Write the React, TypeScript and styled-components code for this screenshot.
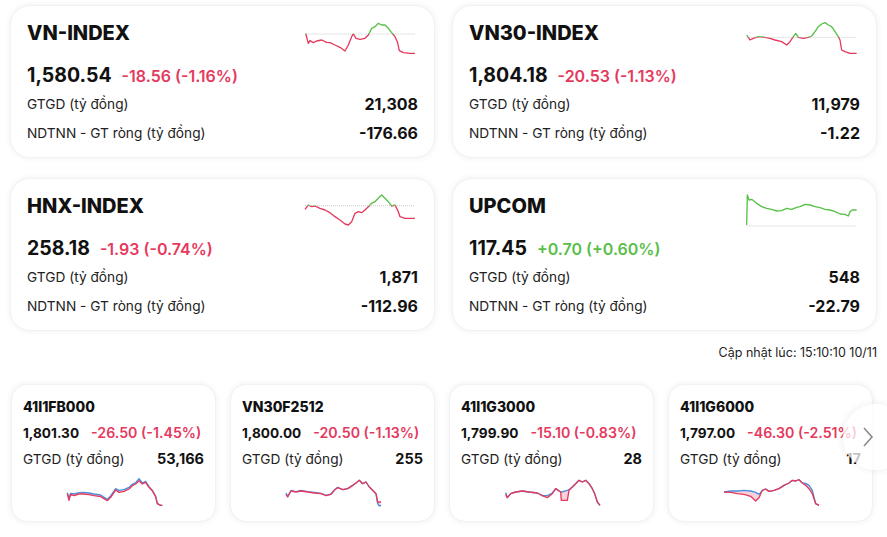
import React from 'react';
import styled, { createGlobalStyle } from 'styled-components';

const GlobalStyle = createGlobalStyle`
  html, body {
    margin: 0;
    padding: 0;
    background: #ffffff;
    font-family: Inter, 'Noto Sans', 'Liberation Sans', sans-serif;
    color: #111;
  }
  * { box-sizing: border-box; }
`;

const RED = '#e5395d';
const GREEN = '#58c048';

const Page = styled.div`
  width: 887px;
  height: 537px;
  overflow: hidden;
  padding: 5px 10px 0 10px;
`;

const IndexGrid = styled.div`
  display: grid;
  grid-template-columns: 425px 425px;
  column-gap: 17px;
  row-gap: 20px;
`;

const IndexCard = styled.div`
  height: 153px;
  background: #fff;
  border-radius: 20px;
  box-shadow: 0 0 6px rgba(0, 0, 0, 0.07);
  border: 1px solid #f1f2f4;
  padding: 12px 16px 0 16px;
`;

const CardHeader = styled.div`
  display: flex;
  justify-content: space-between;
  align-items: flex-start;
  height: 40px;
`;

const IndexName = styled.div`
  font-size: 20px;
  font-weight: 800;
  line-height: 30px;
`;

const PriceRow = styled.div`
  display: flex;
  align-items: baseline;
  gap: 10px;
  margin-top: 4px;
  line-height: 26px;
  white-space: nowrap;
`;

const Price = styled.span`
  font-size: 19.5px;
  font-weight: 700;
`;

const Change = styled.span<{ $up?: boolean }>`
  font-size: 16px;
  font-weight: 600;
  color: ${({ $up }) => ($up ? GREEN : RED)};
`;

const StatRow = styled.div`
  display: flex;
  justify-content: space-between;
  align-items: center;
  height: 29px;
`;

const StatLabel = styled.span`
  font-size: 13.7px;
  color: #222;
`;

const StatValue = styled.span`
  font-size: 16px;
  font-weight: 700;
`;

const UpdatedAt = styled.div`
  text-align: right;
  font-size: 12.5px;
  color: #222;
  margin-top: 14px;
  line-height: 16px;
`;

const Carousel = styled.div`
  position: relative;
  margin-top: 23px;
  margin-left: 1px;
`;

const FutureTrack = styled.div`
  display: flex;
  gap: 14px;
`;

const FutureCard = styled.div`
  flex: 0 0 205px;
  width: 205px;
  min-width: 0;
  height: 138px;
  overflow: hidden;
  background: #fff;
  border-radius: 16px;
  box-shadow: 0 0 6px rgba(0, 0, 0, 0.07);
  border: 1px solid #f1f2f4;
  padding: 11px 11px 0 11px;
  display: flex;
  flex-direction: column;
`;

const FutureName = styled.div`
  font-size: 14px;
  font-weight: 800;
  line-height: 22px;
`;

const FuturePriceRow = styled.div`
  display: flex;
  align-items: baseline;
  gap: 12px;
  line-height: 25px;
  margin-top: 2px;
  white-space: nowrap;
`;

const FuturePrice = styled.span`
  font-size: 13.6px;
  font-weight: 700;
`;

const FutureChange = styled.span`
  font-size: 14.2px;
  font-weight: 600;
  color: ${RED};
`;

const FutureStat = styled.div`
  display: flex;
  justify-content: space-between;
  align-items: center;
  height: 25px;
`;

const FutureValue = styled.span`
  font-size: 14.5px;
  font-weight: 700;
`;

const FutureChart = styled.svg`
  align-self: center;
  margin-top: 4px;
  flex-shrink: 0;
`;

const NextButton = styled.div`
  position: absolute;
  left: 832px;
  top: 20px;
  width: 66px;
  height: 66px;
  border-radius: 50%;
  background: rgba(255, 255, 255, 0.75);
  box-shadow: 0 0 8px rgba(0, 0, 0, 0.08);
  display: flex;
  align-items: center;
  padding-left: 19px;
  color: #888;
`;

type Pt = [number, number];

interface IndexData {
  name: string;
  price: string;
  change: string;
  up?: boolean;
  volume: string;
  foreign: string;
  viewBox: string;
  refY: number;
  points: Pt[];
}

const indices: IndexData[] = [
  {
    name: 'VN-INDEX',
    price: '1,580.54',
    change: '-18.56 (-1.16%)',
    volume: '21,308',
    foreign: '-176.66',
    viewBox: '42 24 342 114',
    refY: 72,
    points: [
      [47, 70], [55, 100], [60, 92], [70, 98], [80, 93], [95, 90], [110, 97], [120, 98],
      [135, 105], [150, 112], [165, 123], [175, 105], [185, 80], [190, 72], [198, 85],
      [210, 88], [225, 85], [235, 75], [245, 55], [255, 50], [265, 40], [275, 45],
      [285, 45], [295, 55], [305, 68], [315, 80], [322, 95], [328, 122], [340, 128],
      [360, 130], [375, 130],
    ],
  },
  {
    name: 'VN30-INDEX',
    price: '1,804.18',
    change: '-20.53 (-1.13%)',
    volume: '11,979',
    foreign: '-1.22',
    viewBox: '903 54 342 114',
    refY: 112,
    points: [
      [905, 105], [915, 120], [925, 115], [940, 110], [960, 112], [975, 115], [990, 120],
      [1010, 125], [1025, 135], [1035, 125], [1045, 110], [1052, 100], [1060, 112],
      [1075, 115], [1090, 112], [1100, 108], [1110, 95], [1120, 80], [1130, 72],
      [1140, 68], [1150, 75], [1160, 80], [1170, 95], [1180, 110], [1185, 120],
      [1190, 150], [1200, 155], [1215, 160], [1235, 160],
    ],
  },
  {
    name: 'HNX-INDEX',
    price: '258.18',
    change: '-1.93 (-0.74%)',
    volume: '1,871',
    foreign: '-112.96',
    viewBox: '912 63 342 114',
    refY: 107,
    points: [
      [915, 118], [925, 105], [935, 110], [945, 108], [960, 115], [975, 120], [990, 128],
      [1005, 140], [1020, 150], [1035, 162], [1045, 165], [1055, 155], [1065, 130],
      [1075, 125], [1085, 128], [1095, 120], [1105, 110], [1115, 100], [1125, 95],
      [1135, 85], [1145, 75], [1155, 85], [1165, 95], [1175, 108], [1185, 105],
      [1195, 125], [1200, 140], [1215, 145], [1245, 145],
    ],
  },
  {
    name: 'UPCOM',
    price: '117.45',
    change: '+0.70 (+0.60%)',
    up: true,
    volume: '548',
    foreign: '-22.79',
    viewBox: '903 63 342 114',
    refY: 168,
    points: [
      [905, 165], [907, 75], [912, 90], [920, 88], [935, 100], [950, 110], [965, 115],
      [980, 118], [995, 123], [1010, 122], [1025, 115], [1040, 118], [1055, 112],
      [1065, 110], [1080, 103], [1095, 105], [1110, 110], [1125, 113], [1140, 118],
      [1155, 120], [1170, 125], [1185, 132], [1200, 133], [1210, 138], [1215, 125],
      [1222, 120], [1235, 120],
    ],
  },
];

interface FutureData {
  name: string;
  price: string;
  change: string;
  volume: string;
  dx: number;
  red: Pt[];
  blueShift: number[];
}

const futures: FutureData[] = [
  {
    name: '41I1FB000',
    price: '1,801.30',
    change: '-26.50 (-1.45%)',
    volume: '53,166',
    dx: 190,
    red: [
      [200, 470], [205, 490], [210, 472], [220, 476], [235, 471], [250, 471], [265, 473],
      [280, 476], [300, 479], [320, 491], [330, 481], [345, 459], [355, 466], [370, 463],
      [385, 456], [395, 446], [405, 441], [415, 431], [425, 441], [435, 436], [445, 451],
      [455, 461], [465, 479], [470, 500], [480, 505], [485, 505],
    ],
    blueShift: [-3, -6, -3, -5, -4, -5, -5, -5, -5, -4, -4, -4, -6, -5, -5, -4, -4, -6, -3, -3, -2, -1, 0, 0, 0, 0],
  },
  {
    name: 'VN30F2512',
    price: '1,800.00',
    change: '-20.50 (-1.13%)',
    volume: '255',
    dx: 846,
    red: [
      [855, 472], [860, 480], [870, 462], [885, 465], [900, 462], [920, 465], [940, 468],
      [960, 470], [975, 476], [990, 472], [1000, 460], [1010, 452], [1025, 458],
      [1040, 455], [1055, 445], [1065, 438], [1075, 430], [1085, 440], [1095, 435],
      [1105, 450], [1115, 460], [1125, 470], [1130, 495], [1135, 495], [1140, 495],
    ],
    blueShift: [-4, -2, -1, -1, -2, -1, -2, -1, -1, -1, -1, -1, 0, 0, 0, 0, 0, 0, 0, 0, 0, 0, 5, 12, 10],
  },
  {
    name: '41I1G3000',
    price: '1,799.90',
    change: '-15.10 (-0.83%)',
    volume: '28',
    dx: 184,
    red: [
      [195, 472], [200, 482], [210, 470], [225, 465], [245, 462], [265, 465], [290, 468],
      [305, 476], [320, 482], [335, 470], [345, 455], [360, 465], [362, 490], [380, 490],
      [385, 460], [395, 450], [405, 440], [415, 430], [425, 435], [435, 430], [445, 440],
      [455, 455], [462, 470], [470, 495], [478, 505],
    ],
    blueShift: [-5, 0, 0, 0, 0, 0, 0, 0, -6, -2, 0, 0, -25, -30, -2, 0, 0, 0, 0, 0, 0, 0, 0, 0, 0],
  },
  {
    name: '41I1G6000',
    price: '1,797.00',
    change: '-46.30 (-2.51%)',
    volume: '17',
    dx: 841,
    red: [
      [850, 465], [870, 466], [890, 470], [910, 472], [930, 478], [945, 492], [955, 482],
      [965, 460], [975, 456], [985, 463], [1000, 460], [1015, 455], [1030, 445],
      [1045, 438], [1055, 430], [1065, 432], [1075, 428], [1085, 438], [1095, 445],
      [1105, 455], [1115, 470], [1125, 500], [1135, 505],
    ],
    blueShift: [0, -4, -8, -12, -16, -26, -10, 0, 0, 0, 0, 0, 0, 0, 0, 0, 0, 0, -6, -10, -10, 0, 0],
  },
];

const toPoints = (pts: Pt[]) => pts.map(([x, y]) => `${x},${y}`).join(' ');

const IndexChart: React.FC<{ data: IndexData; id: string }> = ({ data, id }) => {
  const [vx, vy, vw, vh] = data.viewBox.split(' ').map(Number);
  const line = toPoints(data.points);
  const first = data.points[0][0];
  const last = data.points[data.points.length - 1][0];
  return (
    <svg width={114} height={38} viewBox={data.viewBox}>
      <defs>
        <clipPath id={`${id}-up`}>
          <rect x={vx} y={vy} width={vw} height={data.refY - vy} />
        </clipPath>
        <clipPath id={`${id}-down`}>
          <rect x={vx} y={data.refY} width={vw} height={vh} />
        </clipPath>
      </defs>
      <line
        x1={first}
        x2={last}
        y1={data.refY}
        y2={data.refY}
        stroke="#9a9a9a"
        strokeWidth={1.5}
        strokeDasharray="3 3"
      />
      <polyline points={line} fill="none" stroke={GREEN} strokeWidth={4} strokeLinejoin="round" clipPath={`url(#${id}-up)`} />
      <polyline points={line} fill="none" stroke={RED} strokeWidth={4} strokeLinejoin="round" clipPath={`url(#${id}-down)`} />
    </svg>
  );
};

const FutureSpark: React.FC<{ data: FutureData }> = ({ data }) => {
  const red: Pt[] = data.red.map(([x, y]) => [x - data.dx, y - 414]);
  const blue: Pt[] = red.map(([x, y], i) => [x, y + (data.blueShift[i] || 0)]);
  const area = [...blue, ...[...red].reverse()];
  return (
    <FutureChart width={100} height={34} viewBox="0 0 300 102">
      <polygon points={toPoints(area)} fill="#f3a3b6" fillOpacity={0.5} />
      <polyline points={toPoints(blue)} fill="none" stroke="#4a8fe0" strokeWidth={4} strokeLinejoin="round" />
      <polyline points={toPoints(red)} fill="none" stroke={RED} strokeWidth={4} strokeLinejoin="round" />
    </FutureChart>
  );
};

const App: React.FC = () => {
  return (
    <>
      <GlobalStyle />
      <Page>
        <IndexGrid>
          {indices.map((item, i) => (
            <IndexCard key={item.name}>
              <CardHeader>
                <IndexName>{item.name}</IndexName>
                <IndexChart data={item} id={`idx${i}`} />
              </CardHeader>
              <PriceRow>
                <Price>{item.price}</Price>
                <Change $up={item.up}>{item.change}</Change>
              </PriceRow>
              <StatRow>
                <StatLabel>GTGD (tỷ đồng)</StatLabel>
                <StatValue>{item.volume}</StatValue>
              </StatRow>
              <StatRow>
                <StatLabel>NDTNN - GT ròng (tỷ đồng)</StatLabel>
                <StatValue>{item.foreign}</StatValue>
              </StatRow>
            </IndexCard>
          ))}
        </IndexGrid>

        <UpdatedAt>Cập nhật lúc: 15:10:10 10/11</UpdatedAt>

        <Carousel>
          <FutureTrack>
            {futures.map((f) => (
              <FutureCard key={f.name}>
                <FutureName>{f.name}</FutureName>
                <FuturePriceRow>
                  <FuturePrice>{f.price}</FuturePrice>
                  <FutureChange>{f.change}</FutureChange>
                </FuturePriceRow>
                <FutureStat>
                  <StatLabel>GTGD (tỷ đồng)</StatLabel>
                  <FutureValue>{f.volume}</FutureValue>
                </FutureStat>
                <FutureSpark data={f} />
              </FutureCard>
            ))}
          </FutureTrack>
          <NextButton>
            <svg width="12" height="22" viewBox="0 0 12 22">
              <polyline points="2,2 10,11 2,20" fill="none" stroke="#8a8a8a" strokeWidth={1.6} />
            </svg>
          </NextButton>
        </Carousel>
      </Page>
    </>
  );
};

export default App;
